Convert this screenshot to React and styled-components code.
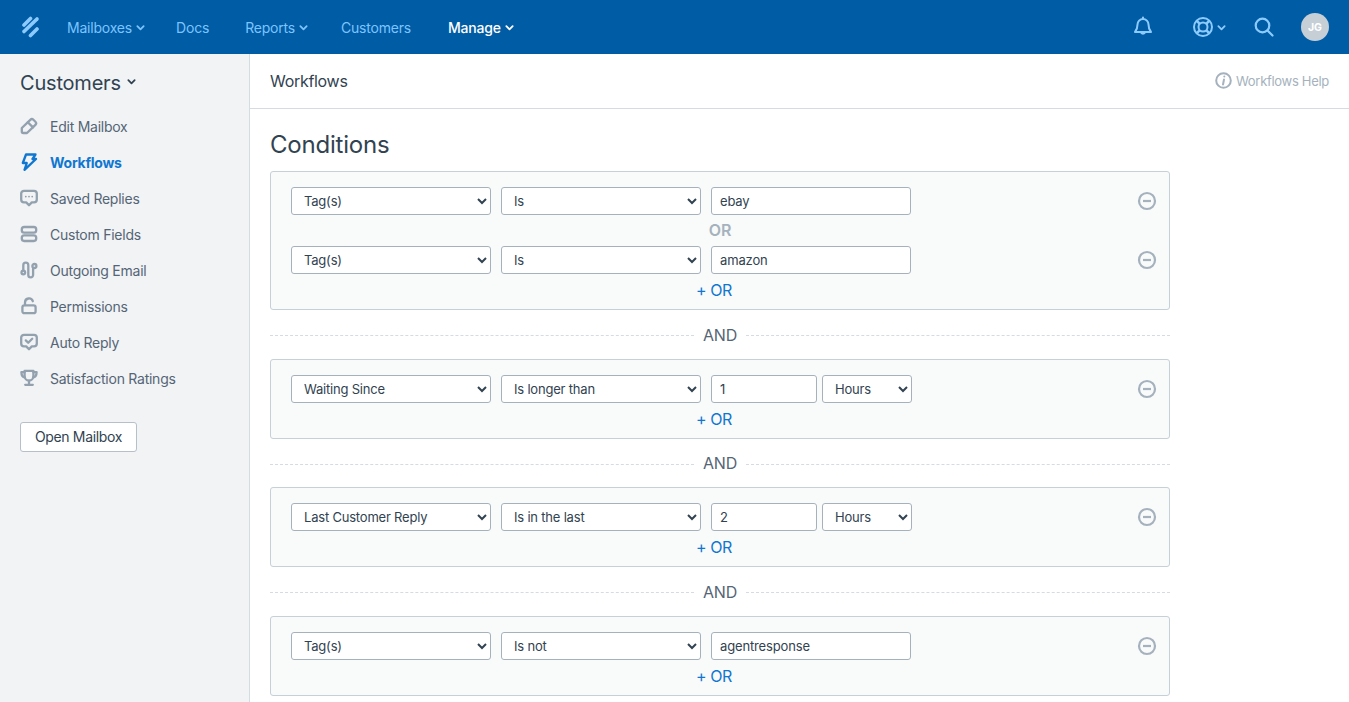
import React from 'react'
import styled, { createGlobalStyle } from 'styled-components'

const GlobalStyle = createGlobalStyle`
  html, body {
    margin: 0;
    height: 100%;
    overflow: hidden;
    background: #fff;
    font-family: Inter, "Noto Sans", Arial, sans-serif;
    font-size: 14px;
    color: #314351;
  }
  * { box-sizing: border-box; }
`

const Page = styled.div`
  height: 702px;
  display: flex;
  flex-direction: column;
  overflow: hidden;
`

const TopBar = styled.header`
  flex: none;
  height: 54px;
  background: #005ca4;
  display: flex;
  align-items: center;
  padding: 0 20px 0 21px;
`

const Logo = styled.svg`
  width: 19px;
  height: 22px;
  margin-right: 27px;
`

const NavItem = styled.a`
  display: flex;
  align-items: center;
  gap: 4px;
  margin-right: ${p => p.$gap}px;
  color: ${p => (p.$active ? '#fff' : '#7cc4ff')};
  font-weight: ${p => (p.$active ? 500 : 400)};
  font-size: 14px;
  letter-spacing: -0.2px;
`

const TopIcons = styled.div`
  margin-left: auto;
  display: flex;
  align-items: center;
`

const IconSlot = styled.span`
  display: flex;
  align-items: center;
  gap: 3px;
  color: #8ccbff;
  margin-right: ${p => p.$gap}px;
`

const Avatar = styled.span`
  width: 28px;
  height: 28px;
  border-radius: 50%;
  background: #c6ced6;
  color: #fff;
  font-size: 10.5px;
  font-weight: 700;
  display: flex;
  align-items: center;
  justify-content: center;
`

const Body = styled.div`
  flex: 1;
  display: flex;
  min-height: 0;
`

const Sidebar = styled.aside`
  flex: none;
  width: 250px;
  background: #f1f3f5;
  border-right: 1px solid #d5dce1;
  padding: 17px 20px 0;
`

const SideTitle = styled.div`
  display: flex;
  align-items: center;
  gap: 6px;
  height: 24px;
  font-size: 20px;
  letter-spacing: -0.2px;
  color: #314351;
  margin-bottom: 13px;
  svg { margin-bottom: 4px; }
`

const SideList = styled.nav`
  display: flex;
  flex-direction: column;
`

const SideItem = styled.a`
  height: 36px;
  display: flex;
  align-items: center;
  font-size: 14px;
  letter-spacing: -0.25px;
  color: ${p => (p.$active ? '#1077d1' : '#556575')};
  font-weight: ${p => (p.$active ? 700 : 400)};
  svg {
    flex: none;
    width: 18px;
    height: 18px;
    margin-right: 12px;
    color: ${p => (p.$active ? '#1077d1' : '#93a1af')};
  }
`

const OpenButton = styled.button`
  display: block;
  margin-top: 26px;
  width: 117px;
  height: 30px;
  padding: 0 0 1px;
  background: #fff;
  border: 1px solid #b5c0ca;
  border-radius: 3px;
  font: inherit;
  font-size: 14px;
  letter-spacing: -0.35px;
  color: #314351;
`

const Main = styled.main`
  flex: 1;
  min-width: 0;
`

const TitleBar = styled.div`
  height: 55px;
  border-bottom: 1px solid #d5dce1;
  padding: 0 20px;
  display: flex;
  align-items: center;
  justify-content: space-between;
  padding-bottom: 1px;
`

const PageTitle = styled.div`
  font-size: 16px;
  letter-spacing: -0.3px;
  color: #314351;
`

const Help = styled.a`
  display: flex;
  align-items: center;
  gap: 4px;
  font-size: 13px;
  letter-spacing: -0.3px;
  color: #a5b2bd;
`

const Content = styled.div`
  width: 940px;
  padding: 0 20px;
`

const Heading = styled.h2`
  margin: 0;
  height: 62px;
  padding-top: 21px;
  font-size: 24px;
  line-height: 30px;
  font-weight: 400;
  letter-spacing: -0.2px;
  color: #314351;
`

const Card = styled.section`
  background: #f9fafa;
  border: 1px solid #c6d0d8;
  border-radius: 3px;
  padding: 15px 20px 0;
`

const Row = styled.div`
  display: flex;
  align-items: center;
  height: 28px;
`

const Select = styled.select`
  width: ${p => p.$w || 200}px;
  height: 28px;
  margin-right: ${p => (p.$gap === undefined ? 10 : p.$gap)}px;
  padding: 0 8px;
  background-color: #fff;
  border: 1px solid #a5b2bd;
  border-radius: 3px;
  font: inherit;
  font-size: 13px;
  letter-spacing: -0.2px;
  color: #314351;
`

const Input = styled.input`
  width: ${p => p.$w || 200}px;
  height: 28px;
  margin-right: 5px;
  padding: 0 8px;
  background: #fff;
  border: 1px solid #a5b2bd;
  border-radius: 3px;
  font: inherit;
  font-size: 13px;
  letter-spacing: -0.15px;
  color: #314351;
`

const Remove = styled.svg`
  margin-left: auto;
  margin-right: -8px;
  width: 20px;
  height: 20px;
  color: #a5b2bd;
`

const OrLabel = styled.div`
  height: 31px;
  display: flex;
  align-items: center;
  justify-content: center;
  padding-bottom: 2px;
  font-size: 16px;
  font-weight: 600;
  color: #a5b2bd;
`

const AddOr = styled.div`
  height: 35px;
  display: flex;
  align-items: center;
  justify-content: center;
  padding: 0 12px 3px 0;
  font-size: 16px;
  letter-spacing: -0.4px;
  color: #1077d1;
`

const AndRow = styled.div`
  height: 48.6px;
  display: flex;
  align-items: center;
  gap: 9px;
  font-size: 16px;
  letter-spacing: -0.2px;
  color: #556575;
  padding-top: 1px;
  &::before, &::after {
    content: '';
    flex: 1;
    border-top: 1px dashed #d5dce1;
    margin-top: 2px;
  }
`

const Chevron = ({ size = 9, width = 2 }) => (
  <svg width={size} height={size} viewBox="0 0 10 10" fill="none" stroke="currentColor" strokeWidth={width} strokeLinecap="round" strokeLinejoin="round">
    <path d="M1.5 3.5 5 7l3.5-3.5" />
  </svg>
)

const icon = children => (
  <svg viewBox="0 0 18 18" fill="none" stroke="currentColor" strokeWidth="2.3" strokeLinecap="round" strokeLinejoin="round">
    {children}
  </svg>
)

const bubble = 'M4 1.800h10a2.800 2.800 0 0 1 2.800 2.800v6a2.800 2.800 0 0 1-2.800 2.800h-2.200L9 16.200l-2.800-2.800H4a2.800 2.800 0 0 1-2.800-2.800v-6A2.800 2.800 0 0 1 4 1.800z'

const sideItems = [
  ['Edit Mailbox', icon(<><path d="M1.800 11 10.300 2.800a2.200 2.200 0 0 1 3.100 0l2 2a2.200 2.200 0 0 1 0 3.100L7 16H3.300a1.500 1.500 0 0 1-1.500-1.500z" /><path d="m7.800 5.200 5.200 5.200" /></>)],
  ['Workflows', icon(<path d="M6 1.500h9.500l-3 4.500H16L4.500 16.800 6.800 10H2.800z" />), true],
  ['Saved Replies', icon(<><path d={bubble} /><path d="M5.800 7.600h.01M9 7.600h.01M12.200 7.600h.01" strokeWidth="1.800" /></>)],
  ['Custom Fields', icon(<><rect x="1.800" y="2" width="14.400" height="5.600" rx="2.400" /><rect x="1.800" y="10.400" width="14.400" height="5.600" rx="2.400" /></>)],
  ['Outgoing Email', icon(<><circle cx="3.300" cy="11.500" r="1.800" /><circle cx="14.400" cy="5" r="2" /><path d="M3.300 9.500V4.200a2.500 2.500 0 0 1 5 0v9.800a2.400 2.400 0 0 0 4.800 0V7.500" /></>)],
  ['Permissions', icon(<><rect x="2.400" y="8.400" width="13.200" height="7.800" rx="2" /><path d="M5 8V5.400a4 4 0 0 1 7.800-1.200" /></>)],
  ['Auto Reply', icon(<><path d={bubble} /><path d="m5.800 7.400 2.400 2.400 4-4" /></>)],
  ['Satisfaction Ratings', icon(<><path d="M4.600 1.800h8.800v5.400a4.400 4.400 0 0 1-8.800 0z" /><path d="M4.600 3.200H1.400c0 3 1.100 4.800 3.600 5.200M13.400 3.200h3.200c0 3-1.100 4.800-3.600 5.200M9 11.600v3.200M5.200 15.800h7.600" /></>)],
]

const conditionCards = [
  [
    { field: 'Tag(s)', op: 'Is', value: 'ebay' },
    { field: 'Tag(s)', op: 'Is', value: 'amazon' },
  ],
  [{ field: 'Waiting Since', op: 'Is longer than', value: '1', unit: 'Hours' }],
  [{ field: 'Last Customer Reply', op: 'Is in the last', value: '2', unit: 'Hours' }],
  [{ field: 'Tag(s)', op: 'Is not', value: 'agentresponse' }],
]

const ConditionRow = ({ field, op, value, unit }) => (
  <Row>
    <Select defaultValue={field}><option>{field}</option></Select>
    <Select defaultValue={op}><option>{op}</option></Select>
    <Input defaultValue={value} $w={unit ? 106 : 200} />
    {unit && <Select $w={90} $gap={0} defaultValue={unit}><option>{unit}</option></Select>}
    <Remove viewBox="0 0 20 20" fill="none" stroke="currentColor" strokeWidth="2.200">
      <circle cx="10" cy="10" r="8" />
      <path d="M6 10h8" />
    </Remove>
  </Row>
)

export default function App() {
  return (
    <Page>
      <GlobalStyle />
      <TopBar>
        <Logo viewBox="0 0 19 22" fill="none" stroke="#8ccbff" strokeWidth="3.600" strokeLinecap="round">
          <path d="M3 9 9.500 2.500" />
          <path d="M3 15.500 16 3" />
          <path d="M9.500 19.500 16 13" />
        </Logo>
        <NavItem $gap={31}>Mailboxes <Chevron /></NavItem>
        <NavItem $gap={36}>Docs</NavItem>
        <NavItem $gap={33}>Reports <Chevron /></NavItem>
        <NavItem $gap={37}>Customers</NavItem>
        <NavItem $active $gap={0}>Manage <Chevron /></NavItem>
        <TopIcons>
          <IconSlot $gap={38}>
            <svg width="22" height="22" viewBox="0 0 22 22" fill="none" stroke="currentColor" strokeWidth="2" strokeLinecap="round" strokeLinejoin="round">
              <path d="M11 3a5.500 5.500 0 0 1 5.500 5.500c0 4.500 1.200 6 2.500 7.500H3c1.300-1.500 2.500-3 2.500-7.500A5.500 5.500 0 0 1 11 3zM11 1.500V3M8.800 16a2.300 2.300 0 0 0 4.400 0" />
            </svg>
          </IconSlot>
          <IconSlot $gap={28}>
            <svg width="22" height="22" viewBox="0 0 22 22" fill="none" stroke="currentColor" strokeWidth="2">
              <circle cx="11" cy="11" r="9" />
              <circle cx="11" cy="11" r="4.500" />
              <path d="m4.800 4.800 3 3M17.200 4.800l-3 3M4.800 17.200l3-3M17.200 17.200l-3-3" strokeWidth="2.600" />
            </svg>
            <Chevron />
          </IconSlot>
          <IconSlot $gap={27}>
            <svg width="20" height="20" viewBox="0 0 20 20" fill="none" stroke="currentColor" strokeWidth="2.200" strokeLinecap="round">
              <circle cx="8.500" cy="8.500" r="6.800" />
              <path d="m13.500 13.500 5 5" />
            </svg>
          </IconSlot>
          <Avatar>JG</Avatar>
        </TopIcons>
      </TopBar>
      <Body>
        <Sidebar>
          <SideTitle>Customers <Chevron /></SideTitle>
          <SideList>
            {sideItems.map(([label, glyph, active]) => (
              <SideItem key={label} $active={active}>{glyph}{label}</SideItem>
            ))}
          </SideList>
          <OpenButton>Open Mailbox</OpenButton>
        </Sidebar>
        <Main>
          <TitleBar>
            <PageTitle>Workflows</PageTitle>
            <Help>
              <svg width="17" height="17" viewBox="0 0 17 17" fill="none" stroke="currentColor" strokeWidth="2">
                <circle cx="8.500" cy="8.500" r="7.300" />
                <path d="M9 7.500 8 12.500" strokeLinecap="round" />
                <path d="M9.300 4.600h.01" strokeLinecap="round" />
              </svg>
              Workflows Help
            </Help>
          </TitleBar>
          <Content>
            <Heading>Conditions</Heading>
            {conditionCards.map((rows, i) => (
              <React.Fragment key={i}>
                {i > 0 && <AndRow>AND</AndRow>}
                <Card>
                  {rows.map((row, j) => (
                    <React.Fragment key={j}>
                      {j > 0 && <OrLabel>OR</OrLabel>}
                      <ConditionRow {...row} />
                    </React.Fragment>
                  ))}
                  <AddOr>+ OR</AddOr>
                </Card>
              </React.Fragment>
            ))}
          </Content>
        </Main>
      </Body>
    </Page>
  )
}
